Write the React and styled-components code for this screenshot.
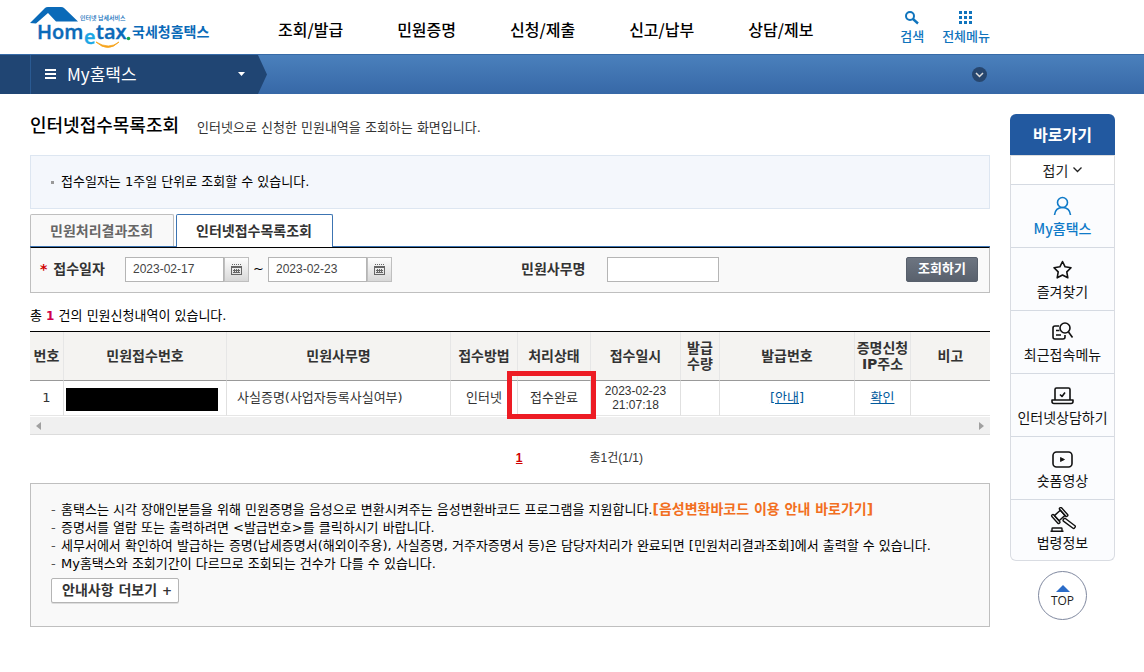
import React from "react";
import styled, { createGlobalStyle, css } from "styled-components";

const GlobalStyle = createGlobalStyle`
  * {
    box-sizing: border-box;
  }
  body {
    margin: 0;
    background: #fff;
    color: #333;
    font-family: "Noto Sans CJK KR", sans-serif;
    font-size: 13px;
    line-height: 18px;
  }
  button, input {
    margin: 0;
    font: inherit;
    color: inherit;
  }
  a {
    color: inherit;
    text-decoration: none;
  }
  ul {
    margin: 0;
    padding: 0;
    list-style: none;
  }
`;

const Header = styled.header`
  display: flex;
  align-items: center;
  height: 54px;
  padding: 0 154px 0 30px;
`;

const LogoLink = styled.a`
  display: block;
  width: 184px;
  height: 46px;
`;

const MainNav = styled.nav`
  display: flex;
  gap: 54px;
  margin-left: 64px;
  padding-top: 4px;
`;

const NavLink = styled.a`
  color: #000;
  font-size: 16px;
  font-weight: 500;
  line-height: 24px;
  white-space: nowrap;
`;

const Tools = styled.div`
  display: flex;
  gap: 18px;
  margin-left: auto;
`;

const ToolButton = styled.button`
  display: flex;
  flex-direction: column;
  align-items: center;
  gap: 1px;
  padding: 0;
  border: 0;
  background: none;
  color: #0f74bd;
  font-weight: 500;
  white-space: nowrap;
`;

const Bar = styled.div`
  display: flex;
  height: 40px;
  padding-right: 157px;
  border-top: 1px solid #376ba8;
  background: linear-gradient(#4a80bc, #3768a7);
`;

const BarMenu = styled.button`
  display: flex;
  align-items: center;
  width: 267px;
  padding: 0 21px 2px 45px;
  border: 0;
  background: linear-gradient(90deg, #204573 30px, #2a5a92 30px, #2a5a92 31px, #204573 31px);
  clip-path: polygon(0 0, 258px 0, 100% 50%, 258px 100%, 0 100%);
  color: #fff;
  font-size: 17px;
  line-height: 24px;

  span {
    margin: 0 auto 0 11px;
  }
`;

const BarToggle = styled.button`
  display: flex;
  align-items: center;
  margin-left: auto;
  padding: 0;
  border: 0;
  background: none;
`;

const Page = styled.div`
  display: flex;
  align-items: flex-start;
  gap: 20px;
  padding: 20px 29px 44px 30px;
`;

const Main = styled.main`
  flex: 1;
  min-width: 0;
  font-family: "DejaVu Sans", "Noto Sans CJK KR", sans-serif;
`;

const TitleRow = styled.div`
  display: flex;
  align-items: baseline;
  gap: 18px;
  height: 41px;
`;

const Title = styled.h1`
  margin: 0;
  color: #000;
  font-size: 18px;
  font-weight: 500;
  line-height: 24px;
`;

const Notice = styled.div`
  display: flex;
  align-items: center;
  gap: 7px;
  height: 54px;
  padding-left: 20px;
  border: 1px solid #dde6f1;
  background: #f4f7fc;
  color: #000;

  &::before {
    content: "";
    width: 3px;
    height: 3px;
    background: #999;
  }
`;

const Tabs = styled.div`
  display: flex;
  gap: 2px;
  margin-top: 5px;
  border-bottom: 1px solid #3c74b2;
`;

const Tab = styled.button`
  height: 32px;
  padding: 0 20px 0 19px;
  border: 1px solid #bfbfbf;
  border-bottom: 0;
  border-radius: 2px 2px 0 0;
  background: #f9f9f9;
  color: #666;
  font-size: 14px;
  font-weight: 700;

  ${({ $active }) =>
    $active &&
    css`
      height: 33px;
      margin-bottom: -1px;
      border-color: #3c74b2;
      background: #fff;
      color: #333;
    `}
`;

const SearchForm = styled.form`
  display: grid;
  grid-template-columns: 94px 396px 86px 1fr auto;
  align-items: center;
  height: 46px;
  padding: 0 11px 2px 0;
  border: 1px solid #bfbfbf;
  border-top-color: #000;
  background: #f9f9f9;
`;

const FieldLabel = styled.label`
  font-size: 14px;
  font-weight: 700;

  i {
    padding: 0 6px 0 9px;
    color: #d00000;
    font-style: normal;
  }
`;

const DateRange = styled.div`
  display: flex;
  align-items: center;

  span {
    width: 19px;
    color: #000;
    text-align: center;
  }
`;

const TextInput = styled.input`
  width: ${({ $width }) => $width}px;
  height: 25px;
  padding: 0 7px 1px;
  border: 1px solid #b5b5b5;
  background: #fff;
  color: #444;
  font-family: "Liberation Sans", "Noto Sans CJK KR", sans-serif;
  font-size: 12px;
`;

const CalendarButton = styled.button`
  display: flex;
  align-items: center;
  justify-content: center;
  width: 25px;
  height: 25px;
  padding: 0;
  border: 1px solid #bfbfbf;
  background: linear-gradient(#fdfdfd, #d8d8d8);
`;

const SubmitButton = styled.button`
  width: 72px;
  height: 25px;
  padding: 0;
  border: 1px solid #58606c;
  border-radius: 2px;
  background: linear-gradient(#6d7581, #59616d);
  color: #fff;
  font-weight: 700;
`;

const Count = styled.p`
  margin: 14px 0 6px;
  color: #000;

  b {
    color: #d0004c;
    font-size: 12px;
  }
`;

const Table = styled.table`
  width: 100%;
  border-collapse: separate;
  border-spacing: 0;
  border-top: 1px solid #000;
  table-layout: fixed;
`;

const Th = styled.th`
  height: 49px;
  padding: 0;
  border-bottom: 1px solid #999;
  background: #f4f3f1;
  background-clip: padding-box;
  font-size: 14px;
  line-height: 16px;
  white-space: pre;

  & + & {
    border-left: 1px solid #e6e6e6;
  }
`;

const Td = styled.td`
  position: relative;
  height: 35px;
  padding: 0 ${({ $align }) => ($align === "left" ? 10 : 0)}px;
  border-bottom: 1px solid #e6e6e6;
  line-height: 14px;
  text-align: ${({ $align }) => $align || "center"};

  & + & {
    border-left: 1px solid #e0e0e0;
  }

  a {
    color: #005a9c;
    text-decoration: underline;
  }

  time {
    display: block;
    font-family: "Liberation Sans", sans-serif;
    font-size: 12px;
  }
`;

const Masked = styled.div`
  width: 152px;
  height: 23px;
  margin: 2px 0 0 2px;
  background: #000;
`;

const Highlight = styled.div`
  position: absolute;
  z-index: 1;
  inset: -10px -6px -4px -11px;
  border: 5px solid #ed1c24;
`;

const ScrollBar = styled.div`
  display: flex;
  align-items: center;
  justify-content: space-between;
  height: 18px;
  margin-top: 1px;
  padding: 0 6px;
  border-bottom: 1px solid #dcdcdc;
  background: #f0f0f0;
`;

const Arrow = styled.i`
  border: 4px solid transparent;
  border-width: 4px 5px;
  border-${({ $side }) => $side}-color: #a0a0a0;
  border-${({ $side }) => ($side === "left" ? "right" : "left")}-width: 0;
`;

const Paging = styled.div`
  display: grid;
  grid-template-columns: 1fr 1fr;
  column-gap: 67px;
  margin-top: 14px;
  padding-left: 92px;
  font-family: "Liberation Sans", "Noto Sans CJK KR", sans-serif;
  font-size: 12px;

  a {
    justify-self: end;
    color: #d00000;
    font-weight: 700;
    text-decoration: underline;
  }
`;

const Info = styled.section`
  min-height: 144px;
  margin-top: 16px;
  padding: 17px 20px 22px;
  border: 1px solid #bfbfbf;
  background: #f9f9f9;
  color: #000;
`;

const InfoItem = styled.li`
  display: flex;
  gap: 4px;
  white-space: nowrap;

  &::before {
    content: "-";
    width: 6px;
    color: #555;
  }

  a {
    color: #f26f21;
    font-size: 14px;
    font-weight: 700;
    line-height: 16px;
  }
`;

const MoreButton = styled.button`
  height: 25px;
  margin-top: 5px;
  padding: 0 6px 0 10px;
  border: 1px solid #b5b5b5;
  border-radius: 2px;
  background: #fff;
  box-shadow: 0 1px 0 #ddd;
  color: #333;
  font-size: 14px;
  font-weight: 700;

  span {
    font-size: 12px;
  }
`;

const Side = styled.aside`
  display: flex;
  flex-direction: column;
  align-items: center;
  width: 105px;
  color: #222;
  font-size: 14px;
`;

const SideTitle = styled.h2`
  width: 100%;
  margin: 0;
  border-radius: 6px 6px 0 0;
  background: #2259a0;
  color: #fff;
  font-size: 16px;
  line-height: 41px;
  text-align: center;
`;

const FoldButton = styled.button`
  display: flex;
  align-items: center;
  justify-content: center;
  gap: 5px;
  width: 100%;
  height: 29px;
  padding: 0;
  border: 1px solid #ddd;
  border-bottom: 0;
  background: #fff;
`;

const SideList = styled.ul`
  width: 100%;
  border: 1px solid #d9dce2;
  border-top: 0;
  border-radius: 0 0 6px 6px;
  background: #fbfcfe;
`;

const SideLink = styled.a`
  display: flex;
  flex-direction: column;
  align-items: center;
  height: 63px;
  padding-top: 8px;
  border-top: 1px solid #d5dae2;
  color: ${({ $active }) => ($active ? "#0f7ac8" : "#111")};
  font-weight: ${({ $active }) => ($active ? 500 : 400)};
  white-space: nowrap;

  li:last-child > & {
    height: 61px;
    padding-top: 7px;
  }
`;

const TopButton = styled.button`
  display: flex;
  flex-direction: column;
  align-items: center;
  justify-content: center;
  gap: 1px;
  width: 49px;
  height: 49px;
  margin-top: 10px;
  padding: 3px 0 0;
  border: 1px solid #8089a0;
  border-radius: 50%;
  background: #fff;
  font-family: "Open Sans", sans-serif;
  font-size: 12px;
  line-height: 16px;
`;

const Logo = () => (
  <svg width="184" height="46" viewBox="30 4 184 46" role="img" aria-label="Hometax 국세청홈택스">
    <path d="M30 23 45 8Q46 7 48 7H61Q63 7 64 8L78 21.5H56L48 13 36 23.5Z" fill="#0a6ab8" />
    <g fontFamily="Open Sans, sans-serif" fontWeight="600" fill="#0a6ab8" stroke="#0a6ab8" strokeWidth="0.4">
      <text x="37" y="39" fontSize="20">Hom</text>
      <text x="84" y="44" fontSize="20" fill="#1ba7e5" stroke="#1ba7e5">e</text>
      <text x="96" y="39" fontSize="20">tax</text>
    </g>
    <circle cx="128.5" cy="38.5" r="1.8" fill="#17a34a" />
    <path d="M96 42q12 11 23 0q-10 8-23 0Z" fill="#f6a31c" stroke="#f6a31c" strokeWidth="0.8" />
    <g fontFamily="Noto Sans CJK KR, sans-serif" fill="#0a6ab8">
      <text x="80" y="20" fontSize="6" fontWeight="500">인터넷 납세서비스</text>
      <text x="132" y="37" fontSize="14" fontWeight="700">국세청홈택스</text>
    </g>
  </svg>
);

const SearchIcon = () => (
  <svg width="16" height="16" viewBox="0 0 16 16" fill="none" stroke="#0f74bd">
    <circle cx="6" cy="6" r="4" strokeWidth="2" />
    <path d="m9 9 5 4.5" strokeWidth="2.4" />
  </svg>
);

const GridIcon = () => (
  <svg width="16" height="16" viewBox="0 0 16 16" fill="#0f74bd">
    {[1, 6, 11].map((y) =>
      [1, 6, 11].map((x) => <rect key={x + "-" + y} x={x} y={y} width="3" height="3" />)
    )}
  </svg>
);

const CalendarIcon = () => (
  <svg width="11" height="11" viewBox="0 0 11 11" shapeRendering="crispEdges">
    <path d="M1 0h1v1H1zM3 0h1v1H3zM5 0h1v1H5zM7 0h1v1H7zM9 0h1v1H9z" fill="#666" />
    <path d="M0 2h11v9H0zM1 4v6h9V4z" fill="#666" fillRule="evenodd" />
    <path d="M2 6h7v1H2zM2 8h7v1H2zM3 5h1v4H3zM5 5h1v4H5zM7 5h1v4H7z" fill="#666" />
  </svg>
);

const lineIcon = {
  width: 26,
  height: 26,
  viewBox: "0 0 26 26",
  fill: "none",
  stroke: "currentColor",
  strokeWidth: 1.6,
  strokeLinejoin: "round",
};

const UserIcon = () => (
  <svg {...lineIcon}>
    <circle cx="12.5" cy="9.5" r="5" />
    <path d="M4.5 22c.5-4.500 3.500-7.500 8-7.500s7.500 3 8 7.500" />
  </svg>
);

const StarIcon = () => (
  <svg {...lineIcon}>
    <path d="m12.5 5.500 2.600 5.300 5.900.9-4.200 4.200 1 5.900-5.300-2.800-5.300 2.800 1-5.900L4 11.700l5.900-.9Z" />
  </svg>
);

const RecentIcon = () => (
  <svg {...lineIcon}>
    <path d="M9 7H5Q3 7 3 9v9q0 2 2 2h8q2 0 2-2v-2M6 11.500h3.500M6 16h5" />
    <circle cx="15" cy="9" r="5" />
    <path d="m18.5 13 4 5.500" />
  </svg>
);

const LaptopIcon = () => (
  <svg {...lineIcon}>
    <path d="M5 18V7.500q0-1.500 1.500-1.500h12q1.500 0 1.500 1.500V18M2 18h21v1.500q0 2-2 2H4q-2 0-2-2Z" />
    <path d="m10 12.500 2 2 3-4" />
  </svg>
);

const VideoIcon = () => (
  <svg {...lineIcon}>
    <rect x="3" y="7" width="19" height="15" rx="3.5" />
    <path d="m10.5 12.500 4 2-4 2Z" fill="currentColor" strokeWidth="0.8" />
  </svg>
);

const GavelIcon = () => (
  <svg {...lineIcon} strokeWidth="1.4">
    <g transform="translate(9.7 8.5) rotate(-42)">
      <rect x="-4" y="-3.5" width="8" height="7" />
      <rect x="4" y="-5.5" width="2.5" height="11" rx="1" />
      <rect x="-6.5" y="-5.5" width="2.5" height="11" rx="1" />
    </g>
    <rect x="2" y="-1.6" width="14" height="3.2" rx="1" transform="translate(12 11) rotate(37)" />
    <path d="M.5 24.300h13M2 24v-2.300q0-.7.7-.7h8.600q.7 0 .7.700V24" />
  </svg>
);

const sideItems = [
  { label: "My홈택스", Icon: UserIcon, active: true },
  { label: "즐겨찾기", Icon: StarIcon },
  { label: "최근접속메뉴", Icon: RecentIcon },
  { label: "인터넷상담하기", Icon: LaptopIcon },
  { label: "숏폼영상", Icon: VideoIcon },
  { label: "법령정보", Icon: GavelIcon },
];

const navItems = ["조회/발급", "민원증명", "신청/제출", "신고/납부", "상담/제보"];

const columns = [
  { label: "번호", width: 33 },
  { label: "민원접수번호", width: 163 },
  { label: "민원사무명" },
  { label: "접수방법", width: 67 },
  { label: "처리상태", width: 73 },
  { label: "접수일시", width: 90 },
  { label: "발급\n수량", width: 39 },
  { label: "발급번호", width: 135 },
  { label: "증명신청\nIP주소", width: 56 },
  { label: "비고", width: 80 },
];

function DateField({ id, value, label }) {
  return (
    <>
      <TextInput id={id} $width={99} defaultValue={value} aria-label={label} />
      <CalendarButton type="button" aria-label="달력">
        <CalendarIcon />
      </CalendarButton>
    </>
  );
}

function ResultTable() {
  return (
    <Table>
      <colgroup>
        {columns.map((c) => (
          <col key={c.label} width={c.width} />
        ))}
      </colgroup>
      <thead>
        <tr>
          {columns.map((c) => (
            <Th key={c.label} scope="col">
              {c.label}
            </Th>
          ))}
        </tr>
      </thead>
      <tbody>
        <tr>
          <Td>1</Td>
          <Td>
            <Masked />
          </Td>
          <Td $align="left">사실증명(사업자등록사실여부)</Td>
          <Td>인터넷</Td>
          <Td>
            접수완료
            <Highlight />
          </Td>
          <Td>
            <time>2023-02-23</time>
            <time>21:07:18</time>
          </Td>
          <Td />
          <Td>
            <a href="#guide">[안내]</a>
          </Td>
          <Td>
            <a href="#confirm">확인</a>
          </Td>
          <Td />
        </tr>
      </tbody>
    </Table>
  );
}

function App() {
  return (
    <>
      <GlobalStyle />
      <Header>
        <LogoLink href="#home">
          <Logo />
        </LogoLink>
        <MainNav>
          {navItems.map((item) => (
            <NavLink key={item} href="#menu">
              {item}
            </NavLink>
          ))}
        </MainNav>
        <Tools>
          <ToolButton>
            <SearchIcon />
            검색
          </ToolButton>
          <ToolButton>
            <GridIcon />
            전체메뉴
          </ToolButton>
        </Tools>
      </Header>
      <Bar>
        <BarMenu>
          <svg width="11" height="12" viewBox="0 0 11 12" fill="#fff">
            <path d="M0 1h11v2H0zM0 5h11v2H0zM0 9h11v2H0z" />
          </svg>
          <span>My홈택스</span>
          <svg width="9" height="5" viewBox="0 0 9 5" fill="#fff">
            <path d="M1 1h7L4.5 5z" />
          </svg>
        </BarMenu>
        <BarToggle aria-label="펼치기">
          <svg width="15" height="15" viewBox="0 0 15 15" fill="none">
            <circle cx="7.5" cy="7.5" r="7.5" fill="#27466e" />
            <path d="m4 6 3.5 3.5L11 6" stroke="#ddd" strokeWidth="1.5" />
          </svg>
        </BarToggle>
      </Bar>
      <Page>
        <Main>
          <TitleRow>
            <Title>인터넷접수목록조회</Title>
            <span>인터넷으로 신청한 민원내역을 조회하는 화면입니다.</span>
          </TitleRow>
          <Notice>접수일자는 1주일 단위로 조회할 수 있습니다.</Notice>
          <Tabs>
            <Tab>민원처리결과조회</Tab>
            <Tab $active>인터넷접수목록조회</Tab>
          </Tabs>
          <SearchForm>
            <FieldLabel htmlFor="from">
              <i>*</i>접수일자
            </FieldLabel>
            <DateRange>
              <DateField id="from" value="2023-02-17" />
              <span>~</span>
              <DateField id="to" value="2023-02-23" label="접수일자 종료" />
            </DateRange>
            <FieldLabel htmlFor="name">민원사무명</FieldLabel>
            <TextInput id="name" $width={112} />
            <SubmitButton type="button">조회하기</SubmitButton>
          </SearchForm>
          <Count>
            총 <b>1</b> 건의 민원신청내역이 있습니다.
          </Count>
          <ResultTable />
          <ScrollBar>
            <Arrow $side="right" />
            <Arrow $side="left" />
          </ScrollBar>
          <Paging>
            <a href="#page1">1</a>
            <span>총1건(1/1)</span>
          </Paging>
          <Info>
            <ul>
              <InfoItem>
                <span>
                  홈택스는 시각 장애인분들을 위해 민원증명을 음성으로 변환시켜주는 음성변환바코드 프로그램을 지원합니다.
                  <a href="#voice">[음성변환바코드 이용 안내 바로가기]</a>
                </span>
              </InfoItem>
              <InfoItem>증명서를 열람 또는 출력하려면 &lt;발급번호&gt;를 클릭하시기 바랍니다.</InfoItem>
              <InfoItem>
                세무서에서 확인하여 발급하는 증명(납세증명서(해외이주용), 사실증명, 거주자증명서 등)은 담당자처리가 완료되면 [민원처리결과조회]에서 출력할 수 있습니다.
              </InfoItem>
              <InfoItem>My홈택스와 조회기간이 다르므로 조회되는 건수가 다를 수 있습니다.</InfoItem>
            </ul>
            <MoreButton>
              안내사항 더보기 <span>+</span>
            </MoreButton>
          </Info>
        </Main>
        <Side>
          <SideTitle>바로가기</SideTitle>
          <FoldButton>
            접기
            <svg width="9" height="6" viewBox="0 0 9 6" fill="none" stroke="#222" strokeWidth="1.3">
              <path d="m.5 .5 4 4 4-4" />
            </svg>
          </FoldButton>
          <SideList>
            {sideItems.map(({ label, Icon, active }) => (
              <li key={label}>
                <SideLink href="#quick" $active={active}>
                  <Icon />
                  {label}
                </SideLink>
              </li>
            ))}
          </SideList>
          <TopButton>
            <svg width="14" height="7" viewBox="0 0 14 7" fill="#2b6cc8">
              <path d="M7 0l7 7H0z" />
            </svg>
            TOP
          </TopButton>
        </Side>
      </Page>
    </>
  );
}

export default App;
